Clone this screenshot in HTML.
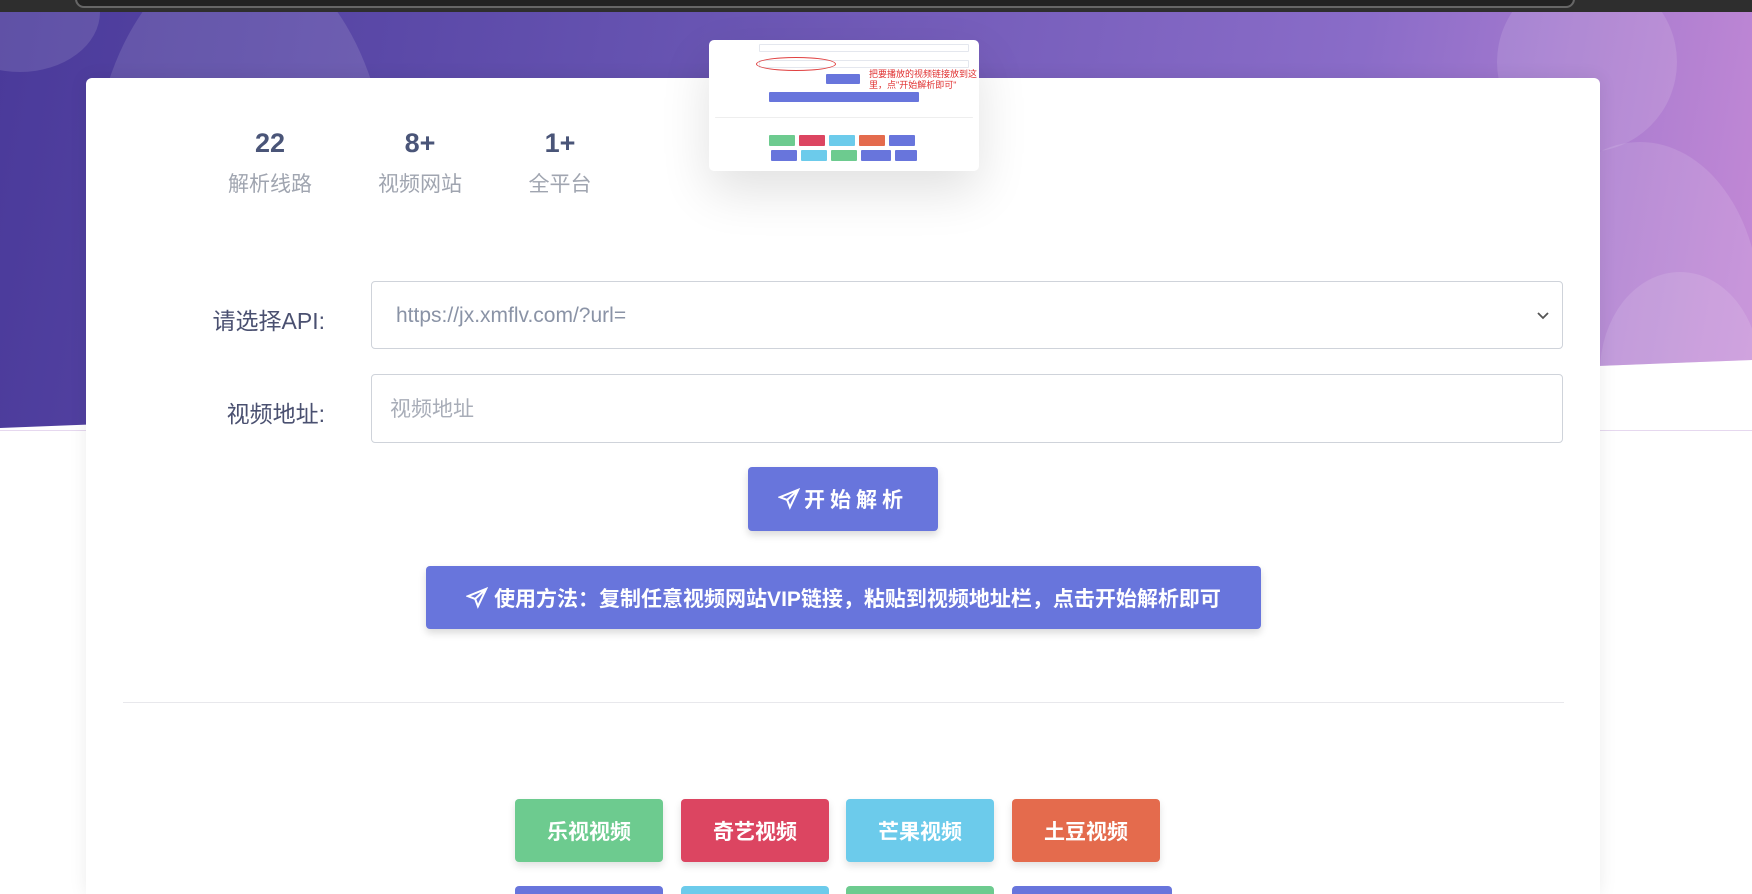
<!DOCTYPE html>
<html><head><meta charset="utf-8"><style>
*{margin:0;padding:0;box-sizing:border-box}
html,body{width:1752px;height:894px;overflow:hidden}
body{background:#fff;font-family:"Liberation Sans","Noto Sans CJK SC",sans-serif;position:relative}
.top{position:absolute;left:0;top:0;width:1752px;height:12px;background:#2e2e2e;overflow:hidden}
.top div{position:absolute;left:75px;top:-10px;width:1500px;height:18px;border:2px solid #666;border-radius:10px;background:#222}
.bg{position:absolute;left:0;top:12px;width:1752px;height:420px;background:linear-gradient(100deg,#4a3a9a 0%,#6552b0 35%,#8a6cc8 75%,#c58ad6 100%);clip-path:polygon(0 0,100% 0,100% 348px,0 416px);overflow:hidden}
.c{position:absolute;border-radius:50%;background:rgba(255,255,255,.12)}
.line{position:absolute;left:0;top:430px;width:1752px;height:1px;background:#e6d8ef}
.card{position:absolute;left:86px;top:78px;width:1514px;height:816px;background:#fff;border-radius:6px 6px 0 0;box-shadow:0 0 18px rgba(0,0,0,.08)}
.stat{position:absolute;text-align:center;width:120px}
.stat b{display:block;font-size:27px;color:#4a5578;font-weight:700}
.stat span{display:block;font-size:21px;color:#a0a5b0;margin-top:9px}
.lbl{position:absolute;font-size:23px;color:#4a5070;text-align:right;width:200px}
.field{position:absolute;left:371px;width:1192px;border:1px solid #cfd3da;border-radius:4px;font-size:21px;color:#8a93a6;padding-left:24px}
.btn{position:absolute;background:#6875dc;color:#fff;font-weight:700;border-radius:4px;box-shadow:0 4px 8px rgba(0,0,0,.15);display:flex;align-items:center;justify-content:center}
.pb{position:absolute;height:63px;color:#fff;font-weight:700;font-size:21px;border-radius:4px;display:flex;align-items:center;justify-content:center;box-shadow:0 4px 8px rgba(0,0,0,.12)}
.pb2{position:absolute;top:886px;height:8px;border-radius:4px 4px 0 0}
.shot{position:absolute;left:709px;top:40px;width:270px;height:131px;background:#fff;border-radius:5px;box-shadow:0 20px 50px rgba(0,0,0,.12);font-size:6px}
.m{position:absolute;border-radius:1px}
</style></head><body>
<div class="top"><div></div></div>
<div class="bg">
<div class="c" style="left:-60px;top:-60px;width:160px;height:120px"></div>
<div class="c" style="left:90px;top:-60px;width:300px;height:500px"></div>
<div class="c" style="left:1497px;top:-40px;width:180px;height:180px"></div>
<div class="c" style="left:1520px;top:130px;width:240px;height:330px"></div>
<div class="c" style="left:1600px;top:260px;width:160px;height:200px"></div>
</div>
<div class="line"></div>
<div class="card"></div>
<div class="stat" style="left:210px;top:128px"><b>22</b><span>解析线路</span></div>
<div class="stat" style="left:360px;top:128px"><b>8+</b><span>视频网站</span></div>
<div class="stat" style="left:500px;top:128px"><b>1+</b><span>全平台</span></div>
<div class="shot">
<div class="m" style="left:50px;top:4px;width:210px;height:8px;border:1px solid #e4e7ee"></div>
<div class="m" style="left:50px;top:20px;width:210px;height:8px;border:1px solid #e4e7ee"></div>
<div class="m" style="left:47px;top:17px;width:80px;height:14px;border:1px solid #e04040;border-radius:50%"></div>
<div style="position:absolute;left:160px;top:29px;color:#e03030;font-size:9px;line-height:11px;width:108px">把要播放的视频链接放到这里，点"开始解析即可"</div>
<div class="m" style="left:117px;top:34px;width:34px;height:10px;background:#6875dc"></div>
<div class="m" style="left:60px;top:52px;width:150px;height:10px;background:#6875dc"></div>
<div class="m" style="left:6px;top:77px;width:258px;height:1px;background:#eee"></div>
<div class="m" style="left:60px;top:95px;width:26px;height:11px;background:#6dcb8f"></div>
<div class="m" style="left:90px;top:95px;width:26px;height:11px;background:#dc4561"></div>
<div class="m" style="left:120px;top:95px;width:26px;height:11px;background:#6ccbeb"></div>
<div class="m" style="left:150px;top:95px;width:26px;height:11px;background:#e46b4d"></div>
<div class="m" style="left:180px;top:95px;width:26px;height:11px;background:#6875dc"></div>
<div class="m" style="left:62px;top:110px;width:26px;height:11px;background:#6875dc"></div>
<div class="m" style="left:92px;top:110px;width:26px;height:11px;background:#6ccbeb"></div>
<div class="m" style="left:122px;top:110px;width:26px;height:11px;background:#6dcb8f"></div>
<div class="m" style="left:152px;top:110px;width:30px;height:11px;background:#6875dc"></div>
<div class="m" style="left:186px;top:110px;width:22px;height:11px;background:#6875dc"></div>
</div>
<div class="lbl" style="left:125px;top:302px">请选择API:</div>
<div class="field" style="top:281px;height:68px;line-height:68px">https://jx.xmflv.com/?url=<svg style="position:absolute;right:12px;top:29px" width="14" height="10" viewBox="0 0 14 10" fill="none" stroke="#555" stroke-width="1.8"><path d="M2 2l5 5 5-5"/></svg></div>
<div class="lbl" style="left:125px;top:395px">视频地址:</div>
<div class="field" style="top:374px;height:69px;line-height:69px;padding-left:18px;color:#a8adb8">视频地址</div>
<div class="btn" style="left:748px;top:467px;width:190px;height:64px;font-size:21px;letter-spacing:5px">
<svg width="22" height="22" viewBox="0 0 24 24" fill="none" stroke="#fff" stroke-width="2.2" style="margin-right:4px"><path d="M22 2L2 10l8 3 3 8z M22 2L10 13"/></svg>开始解析</div>
<div class="btn" style="left:426px;top:566px;width:835px;height:63px;font-size:21px">
<svg width="22" height="22" viewBox="0 0 24 24" fill="none" stroke="#fff" stroke-width="2.2" style="margin-right:6px"><path d="M22 2L2 10l8 3 3 8z M22 2L10 13"/></svg>使用方法：复制任意视频网站VIP链接，粘贴到视频地址栏，点击开始解析即可</div>
<div style="position:absolute;left:123px;top:702px;width:1441px;height:1px;background:#e8e8ec"></div>
<div class="pb" style="left:515px;top:799px;width:148px;background:#6dcb8f">乐视视频</div>
<div class="pb" style="left:681px;top:799px;width:148px;background:#dc4561">奇艺视频</div>
<div class="pb" style="left:846px;top:799px;width:148px;background:#6ccbeb">芒果视频</div>
<div class="pb" style="left:1012px;top:799px;width:148px;background:#e46b4d">土豆视频</div>
<div class="pb2" style="left:515px;width:148px;background:#6875dc"></div>
<div class="pb2" style="left:681px;width:148px;background:#6ccbeb"></div>
<div class="pb2" style="left:846px;width:148px;background:#6dcb8f"></div>
<div class="pb2" style="left:1012px;width:160px;background:#6875dc"></div>
</body></html>
